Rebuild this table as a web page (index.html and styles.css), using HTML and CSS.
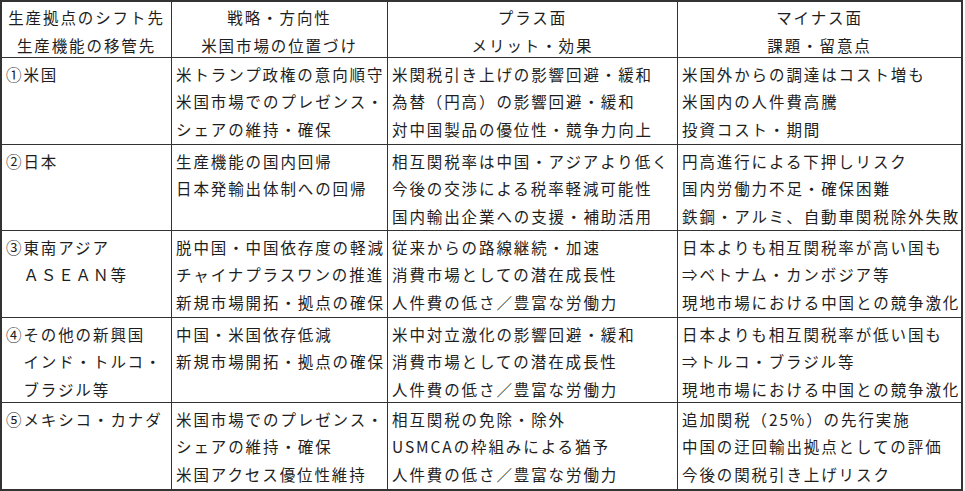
FILE: index.html
```html
<!DOCTYPE html>
<html lang="ja">
<head>
<meta charset="utf-8">
<link rel="stylesheet" href="styles.css">
</head>
<body>
<div class="grid">
  <div class="cell head">生産拠点のシフト先<br>生産機能の移管先</div>
  <div class="cell head">戦略・方向性<br>米国市場の位置づけ</div>
  <div class="cell head">プラス面<br>メリット・効果</div>
  <div class="cell head last-col">マイナス面<br>課題・留意点</div>

  <div class="cell">①米国</div>
  <div class="cell">米トランプ政権の意向順守<br>米国市場でのプレゼンス・<br>シェアの維持・確保</div>
  <div class="cell">米関税引き上げの影響回避・緩和<br>為替（円高）の影響回避・緩和<br>対中国製品の優位性・競争力向上</div>
  <div class="cell last-col">米国外からの調達はコスト増も<br>米国内の人件費高騰<br>投資コスト・期間</div>

  <div class="cell">②日本</div>
  <div class="cell">生産機能の国内回帰<br>日本発輸出体制への回帰</div>
  <div class="cell">相互関税率は中国・アジアより低く<br>今後の交渉による税率軽減可能性<br>国内輸出企業への支援・補助活用</div>
  <div class="cell last-col">円高進行による下押しリスク<br>国内労働力不足・確保困難<br>鉄鋼・アルミ、自動車関税除外失敗</div>

  <div class="cell">③東南アジア<br>　ＡＳＥＡＮ等</div>
  <div class="cell">脱中国・中国依存度の軽減<br>チャイナプラスワンの推進<br>新規市場開拓・拠点の確保</div>
  <div class="cell">従来からの路線継続・加速<br>消費市場としての潜在成長性<br>人件費の低さ／豊富な労働力</div>
  <div class="cell last-col">日本よりも相互関税率が高い国も<br>⇒ベトナム・カンボジア等<br>現地市場における中国との競争激化</div>

  <div class="cell">④その他の新興国<br>　インド・トルコ・<br>　ブラジル等</div>
  <div class="cell">中国・米国依存低減<br>新規市場開拓・拠点の確保</div>
  <div class="cell">米中対立激化の影響回避・緩和<br>消費市場としての潜在成長性<br>人件費の低さ／豊富な労働力</div>
  <div class="cell last-col">日本よりも相互関税率が低い国も<br>⇒トルコ・ブラジル等<br>現地市場における中国との競争激化</div>

  <div class="cell last-row">⑤メキシコ・カナダ</div>
  <div class="cell last-row">米国市場でのプレゼンス・<br>シェアの維持・確保<br>米国アクセス優位性維持</div>
  <div class="cell last-row">相互関税の免除・除外<br>USMCAの枠組みによる猶予<br>人件費の低さ／豊富な労働力</div>
  <div class="cell last-row last-col">追加関税（25%）の先行実施<br>中国の迂回輸出拠点としての評価<br>今後の関税引き上げリスク</div>
</div>
</body>
</html>
```

FILE: styles.css
```css
html, body {
  margin: 0;
  padding: 0;
  background: #ffffff;
}
body {
  font-family: "Noto Sans CJK JP", "Noto Sans", sans-serif;
  color: #1e1e1e;
}
.grid {
  display: grid;
  grid-template-columns: 170px 216px 290px 283px;
  grid-template-rows: 56px 87px 86px 87px 85px 86px;
  width: 963px;
  box-sizing: border-box;
  border: 2px solid #333333;
  font-size: 15.5px;
  letter-spacing: 1.9px;
  line-height: 27.3px;
}
.cell {
  border-right: 1px solid #333333;
  border-bottom: 1px solid #333333;
  padding: 3px 0 0 4px;
  white-space: nowrap;
  overflow: hidden;
  text-align: left;
}
.cell.head {
  text-align: center;
  padding: 2px 0 0;
  line-height: 27.6px;
}
.cell.last-col {
  border-right: none;
}
.cell.last-row {
  border-bottom: none;
}
```
